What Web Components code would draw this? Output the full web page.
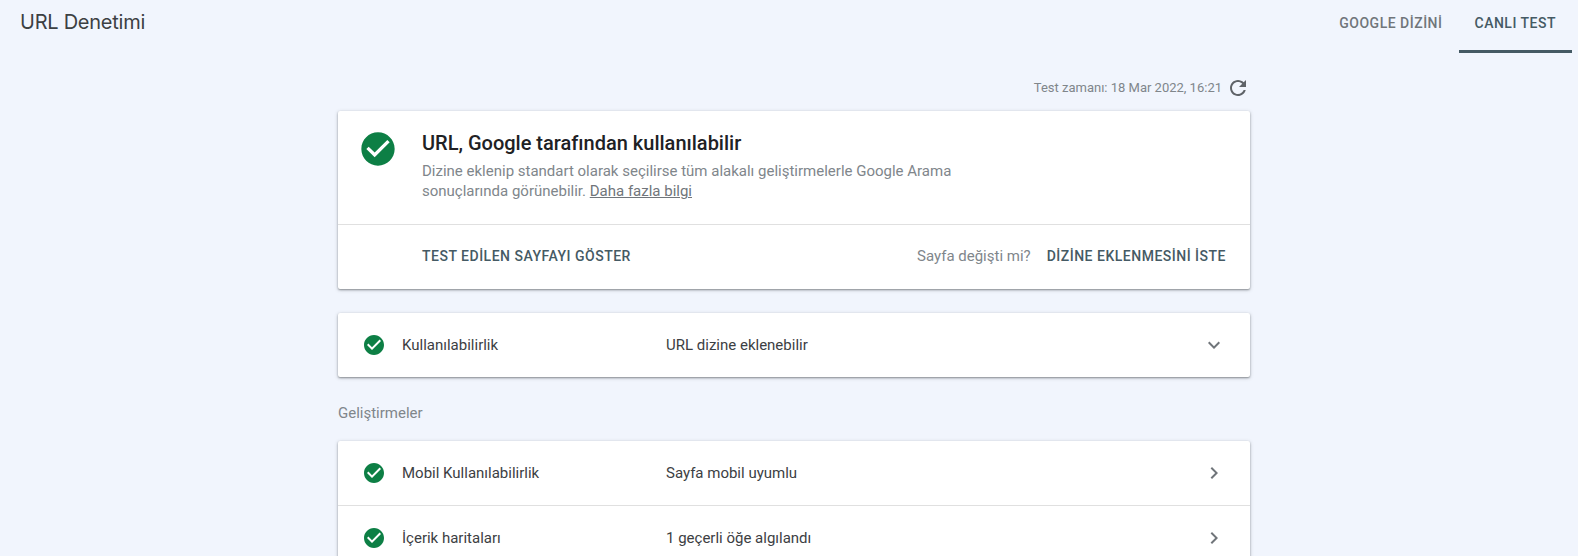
<!DOCTYPE html>
<html lang="tr">
<head>
<meta charset="utf-8">
<title>URL Denetimi</title>
<style>
  html, body { margin: 0; height: 100%; overflow: hidden; }
  body { background: #f1f5fd; font-family: Roboto, "Liberation Sans", sans-serif; }
</style>
</head>
<body>
<inspect-page>
  <top-bar slot="top" heading="URL Denetimi">
    <top-tab>GOOGLE DİZİNİ</top-tab>
    <top-tab active>CANLI TEST</top-tab>
  </top-bar>
  <test-time>Test zamanı: 18 Mar 2022, 16:21</test-time>
  <verdict-card heading="URL, Google tarafından kullanılabilir">
    Dizine eklenip standart olarak seçilirse tüm alakalı geliştirmelerle Google Arama<br>
    <span>sonuçlarında görünebilir.</span> <a href="#">Daha fazla bilgi</a>
  </verdict-card>
  <row-list>
    <result-row label="Kullanılabilirlik" value="URL dizine eklenebilir" chevron="down"></result-row>
  </row-list>
  <section-label>Geliştirmeler</section-label>
  <row-list>
    <result-row label="Mobil Kullanılabilirlik" value="Sayfa mobil uyumlu"></result-row>
    <result-row label="İçerik haritaları" value="1 geçerli öğe algılandı"></result-row>
  </row-list>
</inspect-page>

<script>
const CHECK_PATH = 'M12 2C6.48 2 2 6.48 2 12s4.48 10 10 10 10-4.48 10-10S17.52 2 12 2zm-2 15l-5-5 1.41-1.41L10 14.17l7.59-7.59L19 8l-9 9z';
const CARD_SHADOW = '0 1px 2px rgba(60,64,67,.5), 0 1px 4px rgba(60,64,67,.2)';

class InspectPage extends HTMLElement {
  constructor() {
    super();
    this.attachShadow({ mode: 'open' });
    this.shadowRoot.innerHTML = `
      <style>
        :host { display: block; }
        main {
          display: flex;
          flex-direction: column;
          padding: 0 328px 0 338px;
        }
      </style>
      <slot name="top"></slot>
      <main><slot></slot></main>
    `;
  }
}

class TopBar extends HTMLElement {
  constructor() {
    super();
    this.attachShadow({ mode: 'open' });
    this.shadowRoot.innerHTML = `
      <style>
        :host {
          display: flex;
          justify-content: space-between;
          height: 53px;
          padding: 0 6px 0 20px;
        }
        h1 {
          margin: 0;
          padding-top: 9px;
          font: 400 20px/26px Inter, "Open Sans", sans-serif;
          letter-spacing: -0.25px;
          color: #3c4043;
        }
        nav { display: flex; }
      </style>
      <h1></h1>
      <nav><slot></slot></nav>
    `;
    this.shadowRoot.querySelector('h1').textContent = this.getAttribute('heading');
  }
}

class TopTab extends HTMLElement {
  constructor() {
    super();
    this.attachShadow({ mode: 'open' });
    this.shadowRoot.innerHTML = `
      <style>
        :host {
          display: block;
          box-sizing: border-box;
          height: 53px;
          padding: 14px 16px 0;
          font: 500 14px/18px Roboto, sans-serif;
          letter-spacing: 0.5px;
          color: #70757a;
        }
        :host([active]) {
          color: #455a64;
          border-bottom: 3px solid #455a64;
        }
      </style>
      <slot></slot>
    `;
  }
}

class TestTime extends HTMLElement {
  constructor() {
    super();
    this.attachShadow({ mode: 'open' });
    this.shadowRoot.innerHTML = `
      <style>
        :host {
          display: flex;
          justify-content: flex-end;
          align-items: center;
          gap: 4px;
          height: 24px;
          margin: 23px 0 11px;
          font: 400 13px/16px Roboto, sans-serif;
          color: #80868b;
        }
        svg { display: block; width: 24px; height: 24px; fill: #5f6368; }
      </style>
      <span><slot></slot></span>
      <svg viewBox="0 0 24 24"><path d="M17.65 6.35C16.2 4.9 14.21 4 12 4c-4.42 0-7.99 3.58-7.99 8s3.57 8 7.99 8c3.73 0 6.84-2.55 7.73-6h-2.08c-.82 2.33-3.04 4-5.65 4-3.31 0-6-2.69-6-6s2.69-6 6-6c1.66 0 3.14.69 4.22 1.78L13 11h7V4l-2.35 2.35z"/></svg>
    `;
  }
}

class VerdictCard extends HTMLElement {
  constructor() {
    super();
    this.attachShadow({ mode: 'open' });
    this.shadowRoot.innerHTML = `
      <style>
        :host {
          display: block;
          background: #fff;
          border-radius: 2px;
          box-shadow: ${CARD_SHADOW};
          margin-bottom: 24px;
        }
        .top {
          display: flex;
          height: 114px;
          box-sizing: border-box;
          padding: 18px 0 0 20px;
          border-bottom: 1px solid #e0e0e0;
        }
        svg { display: block; width: 40px; height: 40px; fill: #0d7f45; flex: none; }
        .copy { margin-left: 24px; padding-top: 1px; }
        h2 {
          margin: 0;
          font: 500 20px/26px Roboto, sans-serif;
          color: #202124;
        }
        p {
          margin: 5px 0 0;
          font: 400 15px/20px Roboto, sans-serif;
          color: #80868b;
        }
        ::slotted(a) { color: #70757a; text-decoration: underline; }
        .actions {
          display: flex;
          align-items: center;
          box-sizing: border-box;
          height: 64px;
          padding: 0 24px 2px 84px;
          font: 500 14px/18px Roboto, sans-serif;
          letter-spacing: 0.5px;
          color: #455a64;
        }
        .ask {
          margin-left: auto;
          margin-right: 16px;
          font: 400 15px/20px Roboto, sans-serif;
          letter-spacing: 0;
          color: #80868b;
        }
      </style>
      <div class="top">
        <svg viewBox="0 0 24 24"><path fill-rule="evenodd" d="${CHECK_PATH}"/></svg>
        <div class="copy">
          <h2></h2>
          <p><slot></slot></p>
        </div>
      </div>
      <div class="actions">
        <span>TEST EDİLEN SAYFAYI GÖSTER</span>
        <span class="ask">Sayfa değişti mi?</span>
        <span>DİZİNE EKLENMESİNİ İSTE</span>
      </div>
    `;
    this.shadowRoot.querySelector('h2').textContent = this.getAttribute('heading');
  }
}

class RowList extends HTMLElement {
  constructor() {
    super();
    this.attachShadow({ mode: 'open' });
    this.shadowRoot.innerHTML = `
      <style>
        :host {
          display: block;
          background: #fff;
          border-radius: 2px;
          box-shadow: ${CARD_SHADOW};
        }
      </style>
      <slot></slot>
    `;
  }
}

class ResultRow extends HTMLElement {
  constructor() {
    super();
    this.attachShadow({ mode: 'open' });
    const down = this.getAttribute('chevron') === 'down';
    this.shadowRoot.innerHTML = `
      <style>
        :host {
          display: flex;
          align-items: center;
          height: 64px;
          padding: 0 24px;
          font: 400 15px/20px Roboto, sans-serif;
          color: #3c4043;
        }
        :host(:not(:last-child)) { border-bottom: 1px solid #e0e0e0; }
        svg { display: block; width: 24px; height: 24px; flex: none; }
        .ok { fill: #0d7f45; }
        .label { margin-left: 16px; width: 264px; flex: none; }
        .value { flex: 1; }
        .more { fill: #70757a; }
      </style>
      <svg class="ok" viewBox="0 0 24 24"><path fill-rule="evenodd" d="${CHECK_PATH}"/></svg>
      <span class="label">${this.getAttribute('label')}</span>
      <span class="value">${this.getAttribute('value')}</span>
      <svg class="more" viewBox="0 0 24 24"><path d="${down
        ? 'M16.59 8.59L12 13.17 7.41 8.59 6 10l6 6 6-6z'
        : 'M10 6L8.59 7.41 13.17 12l-4.58 4.59L10 18l6-6z'}"/></svg>
    `;
  }
}

class SectionLabel extends HTMLElement {
  constructor() {
    super();
    this.attachShadow({ mode: 'open' });
    this.shadowRoot.innerHTML = `
      <style>
        :host {
          display: block;
          height: 64px;
          box-sizing: border-box;
          padding-top: 26px;
          font: 400 15px/20px Roboto, sans-serif;
          color: #80868b;
        }
      </style>
      <slot></slot>
    `;
  }
}

customElements.define('inspect-page', InspectPage);
customElements.define('top-bar', TopBar);
customElements.define('top-tab', TopTab);
customElements.define('test-time', TestTime);
customElements.define('verdict-card', VerdictCard);
customElements.define('row-list', RowList);
customElements.define('result-row', ResultRow);
customElements.define('section-label', SectionLabel);
</script>
</body>
</html>
